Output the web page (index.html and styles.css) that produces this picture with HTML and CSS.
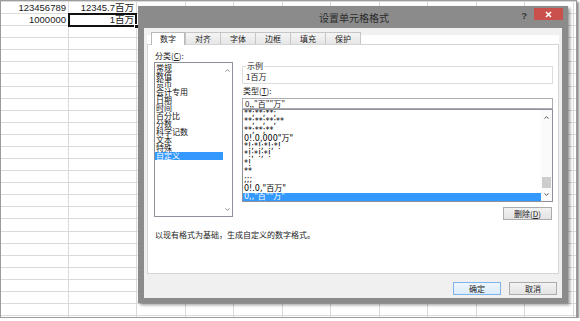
FILE: index.html
```html
<!DOCTYPE html>
<html lang="zh-CN">
<head>
  <meta charset="UTF-8">
  <title>设置单元格格式</title>
  <link rel="stylesheet" href="styles.css">
</head>
<body>
  <div class="shot">
    <!-- worksheet behind the dialog -->
    <div class="sheet">
      <div class="col col-wide">
        <div class="cell">123456789</div>
        <div class="cell">1000000</div>
      </div>
      <div class="col col-wide">
        <div class="cell">12345.7百万</div>
        <div class="cell active">1百万<span class="handle"></span></div>
      </div>
      <div class="col"></div>
      <div class="col"></div>
      <div class="col"></div>
      <div class="col"></div>
      <div class="col"></div>
      <div class="col"></div>
      <div class="col"></div>
      <div class="col"></div>
      <div class="col"></div>
    </div>

    <!-- Format Cells dialog -->
    <div class="dialog">
      <div class="titlebar">
        <span></span>
        <span class="title">设置单元格格式</span>
        <div class="controls">
          <span class="help">?</span>
          <span class="close">
            <svg width="7" height="7" viewBox="0 0 7 7"><path d="M1 1L6 6M6 1L1 6" stroke="#fff" stroke-width="1.6"/></svg>
          </span>
        </div>
      </div>

      <div class="client">
        <div class="tabs">
          <span class="tab active">数字</span>
          <span class="tab">对齐</span>
          <span class="tab">字体</span>
          <span class="tab">边框</span>
          <span class="tab">填充</span>
          <span class="tab">保护</span>
        </div>

        <div class="page">
          <div class="cols">
            <div class="category">
              <div class="label">分类(<u>C</u>):</div>
              <div class="listbox cat-list">
                <ul>
                  <li>常规</li>
                  <li>数值</li>
                  <li>货币</li>
                  <li>会计专用</li>
                  <li>日期</li>
                  <li>时间</li>
                  <li>百分比</li>
                  <li>分数</li>
                  <li>科学记数</li>
                  <li>文本</li>
                  <li>特殊</li>
                  <li class="selected">自定义</li>
                </ul>
                <div class="vscroll">
                  <span class="arrow up"><svg width="5" height="3" viewBox="0 0 5 3"><path d="M0.5 2.5L2.5 0.7L4.5 2.5" fill="none" stroke="#8a8a8a"/></svg></span>
                  <span class="track"></span>
                  <span class="arrow down"><svg width="5" height="3" viewBox="0 0 5 3"><path d="M0.5 0.5L2.5 2.3L4.5 0.5" fill="none" stroke="#8a8a8a"/></svg></span>
                </div>
              </div>
            </div>

            <div class="detail">
              <fieldset class="sample">
                <legend>示例</legend>
                <div class="sample-value">1百万</div>
              </fieldset>
              <div class="label">类型(<u>T</u>):</div>
              <div class="type-input">0,,"百""万"</div>
              <div class="listbox type-list">
                <ul>
                  <li>**;**;**;</li>
                  <li>**;**;**;**</li>
                  <li>**;**;**</li>
                  <li>0!.0,000"万"</li>
                  <li>*!;*!;*!;*!</li>
                  <li>*!;*!;*!</li>
                  <li>*!</li>
                  <li>**</li>
                  <li>;;;</li>
                  <li>0!.0,"百万"</li>
                  <li class="selected">0,,"百""万"</li>
                </ul>
                <div class="vscroll">
                  <span class="arrow up"><svg width="5" height="3" viewBox="0 0 5 3"><path d="M0.5 2.5L2.5 0.7L4.5 2.5" fill="none" stroke="#555"/></svg></span>
                  <span class="track"><span class="thumb"></span></span>
                  <span class="arrow down"><svg width="5" height="3" viewBox="0 0 5 3"><path d="M0.5 0.5L2.5 2.3L4.5 0.5" fill="none" stroke="#555"/></svg></span>
                </div>
              </div>
              <div class="actions">
                <button class="btn">删除(<u>D</u>)</button>
              </div>
            </div>
          </div>
          <p class="note">以现有格式为基础，生成自定义的数字格式。</p>
        </div>

        <div class="footer">
          <button class="btn default">确定</button>
          <button class="btn">取消</button>
        </div>
      </div>
    </div>
  </div>
</body>
</html>
```

FILE: styles.css
```css
* {
  box-sizing: border-box;
}

body {
  margin: 0;
  font-family: "Liberation Sans", "Noto Sans CJK SC", sans-serif;
  color: #222;
  background: #fff;
}

/* Screenshot frame */
.shot {
  position: relative;
  width: 577px;
  height: 318px;
  border: 1px solid #9c9c9c;
  box-shadow: 2px 2px 2px rgba(0, 0, 0, 0.45);
  overflow: hidden;
  background: #fff;
}

/* Worksheet */
.sheet {
  display: flex;
  height: 100%;
  background-image: repeating-linear-gradient(to bottom, #dadada 0 1px, transparent 1px 12.08px);
}
.col {
  flex: none;
  width: 48.5px;
  border-right: 1px solid #dadada;
  padding-top: 1px;
}
.col-wide {
  width: 68px;
}
.cell {
  height: 12.08px;
  padding: 0 2px;
  text-align: right;
  font-size: 9.5px;
  line-height: 12px;
  color: #1a1a1a;
}
.cell.active {
  position: relative;
  outline: 2px solid #111;
  outline-offset: -1px;
}
.handle {
  position: absolute;
  right: -3px;
  bottom: -3px;
  width: 5px;
  height: 5px;
  background: #111;
  border: 1px solid #fff;
}

/* Dialog window */
.dialog {
  position: absolute;
  left: 137px;
  top: 5px;
  width: 430px;
  height: 297px;
  padding: 0 6px 5px;
  background: #8b8b8b;
  box-shadow: 2px 2px 3px rgba(0, 0, 0, 0.4);
  display: flex;
  flex-direction: column;
}
.titlebar {
  flex: none;
  height: 22px;
  display: grid;
  grid-template-columns: 1fr auto 1fr;
  align-items: center;
}
.title {
  font-family: "Noto Sans CJK SC", sans-serif;
  font-size: 10px;
  color: #2b2b2b;
  padding-left: 2px;
}
.controls {
  justify-self: end;
  align-self: start;
  display: flex;
  align-items: flex-start;
  margin-right: -1px;
}
.help {
  font-size: 9px;
  font-weight: bold;
  color: #333;
  margin: 5px 7px 0 0;
  line-height: 10px;
}
.close {
  width: 29px;
  height: 12px;
  margin-top: 2px;
  background: #c9504b;
  display: flex;
  align-items: center;
  justify-content: center;
}

.client {
  flex: 1;
  background: #f0f0f0;
  padding: 4px 3px 0;
  display: flex;
  flex-direction: column;
  font-family: "Noto Sans CJK SC", sans-serif;
  font-size: 8px;
}

/* Tabs */
.tabs {
  flex: none;
  height: 12px;
  display: flex;
  align-items: flex-end;
  padding-left: 4px;
  background: linear-gradient(#f0f0f0 3px, #fff 3px);
}
.tab {
  width: 36px;
  height: 12px;
  margin-left: -1px;
  border: 1px solid #c6c6c6;
  border-bottom: none;
  background: linear-gradient(#f4f4f4, #e6e6e6);
  text-align: center;
  line-height: 11px;
  color: #222;
}
.tab.active {
  position: relative;
  z-index: 1;
  width: 34px;
  height: 13px;
  margin: 0 1px -1px 0;
  background: #fff;
  border-color: #b9b9b9;
}

/* Tab page */
.page {
  flex: none;
  height: 230px;
  border: 1px solid #d5d5d5;
  background: #fff;
  padding: 6px 5px 0 6px;
}
.cols {
  display: flex;
  gap: 9px;
}
.category {
  width: 79px;
}
.detail {
  width: 311px;
}
.label {
  height: 10px;
  line-height: 10px;
  padding-left: 1px;
}
.category .label {
  margin-bottom: 1px;
}

.listbox {
  display: flex;
  border: 1px solid #8e9199;
  background: #fff;
}
.listbox ul {
  flex: 1;
  list-style: none;
  margin: 0;
  padding: 0;
  overflow: hidden;
}
.listbox li {
  padding-left: 1px;
  white-space: nowrap;
}
.listbox li.selected {
  background: #3399ff;
  color: #fff;
}
.cat-list {
  height: 155px;
}
.cat-list ul {
  padding-top: 1px;
}
.cat-list li {
  height: 8px;
  line-height: 8px;
  color: #111;
}
.type-list {
  height: 93px;
}
.type-list li {
  height: 8.3px;
  line-height: 8.3px;
  font-family: "DejaVu Sans", "Noto Sans CJK SC", sans-serif;
  font-size: 8px;
  color: #000;
}

.vscroll {
  flex: none;
  width: 9px;
  display: flex;
  flex-direction: column;
}
.type-list .vscroll {
  width: 11px;
  background: #fafafa;
}
.arrow {
  flex: none;
  display: flex;
  align-items: center;
  justify-content: center;
}
.arrow.up {
  height: 15px;
}
.arrow.down {
  height: 13px;
}
.track {
  flex: 1;
  display: flex;
  flex-direction: column;
  justify-content: flex-end;
}
.thumb {
  height: 11px;
  margin: 0 1px;
  background: #cdcdcd;
}

/* Sample group */
.sample {
  margin: 10px 0 0;
  padding: 0 3px 1px;
  min-width: 0;
  border: 1px solid #dcdcdc;
}
.sample legend {
  padding: 0 1px;
  line-height: 10px;
}
.sample-value {
  line-height: 11px;
}
.detail .label {
  margin-top: 2px;
}
.type-input {
  margin-top: 2px;
  height: 11px;
  border: 1px solid #abadb3;
  padding: 0 2px;
  line-height: 9px;
  white-space: nowrap;
}

.actions {
  display: flex;
  justify-content: flex-end;
  margin-top: 5px;
  padding-right: 1px;
}

/* Buttons */
.btn {
  width: 49px;
  height: 13px;
  padding: 0;
  border: 1px solid #acacac;
  background: linear-gradient(#f2f2f2, #e3e3e3);
  font-family: "Noto Sans CJK SC", sans-serif;
  font-size: 8px;
  line-height: 11px;
  color: #222;
}
.btn.default {
  border-color: #7eb4ea;
  background: linear-gradient(#eef5fc, #dcecfc);
}

.note {
  margin: 10px 0 0;
  padding-left: 1px;
  line-height: 10px;
  color: #222;
}

.footer {
  flex: 1;
  display: flex;
  justify-content: flex-end;
  gap: 8px;
  padding: 8px 2px 0 0;
}
.footer .btn {
  width: 48px;
}
```
